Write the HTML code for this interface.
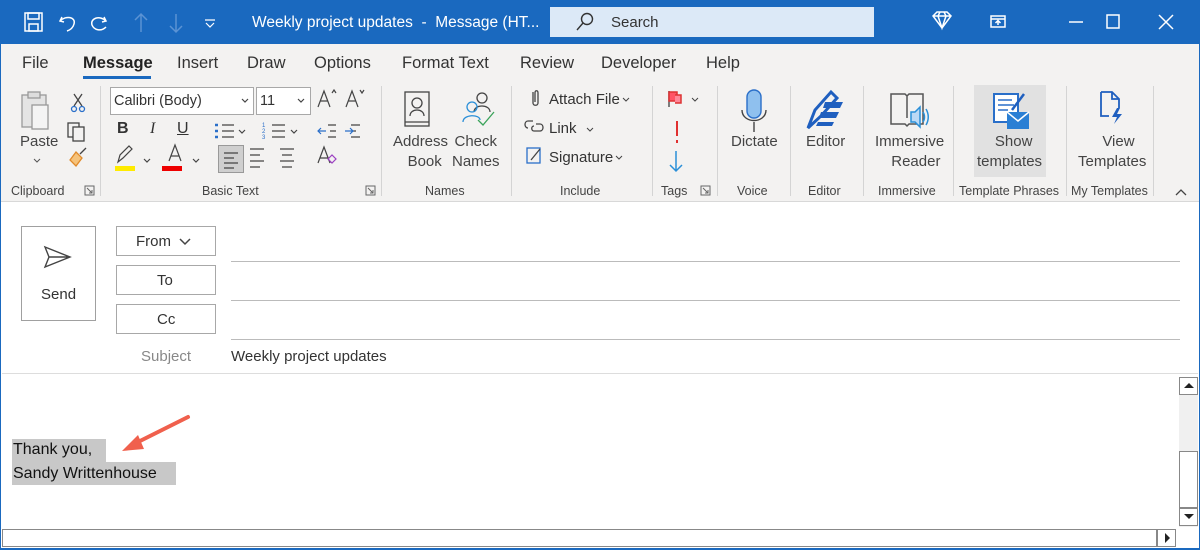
<!DOCTYPE html>
<html><head><meta charset="utf-8"><style>
*{margin:0;padding:0;box-sizing:border-box}
body{width:1200px;height:550px;position:relative;overflow:hidden;background:#fff;font-family:"Liberation Sans",sans-serif;color:#333}
.a{position:absolute;white-space:nowrap}
.tb{left:0;top:0;width:1200px;height:44px;background:#1a69bf}
.rb{left:0;top:44px;width:1200px;height:158px;background:#f3f2f1;border-bottom:1px solid #d8d8d8}
.tab{top:54px;font-size:16.5px;color:#333}
.gl{top:184px;font-size:12.5px;color:#444}
.sep{top:86px;width:1px;height:110px;background:#d4d4d4}
.big{font-size:15px;color:#444;text-align:center;line-height:20px}
.sm{font-size:15px;color:#333}
.box{border:1px solid #a8a8a8;background:#fff}
.ln{height:1px;background:#bbb}
</style></head><body>
<div class="a tb"></div>
<svg class="a" style="left:24px;top:12px" width="200" height="22" fill="none" stroke="#fff" stroke-width="1.5">
<rect x="1" y="1" width="17" height="18"/><rect x="4" y="1" width="11" height="6"/><rect x="5" y="12" width="9" height="7"/>
<path d="M38 5 L36 9 L40 10 M36 9 C42 3 52 5 50 12 C49 16 46 18 43 19"/>
<path d="M80 5 L82 9 L78 10 M82 9 C76 3 66 6 68 13 C70 18 77 20 82 15" />
<path d="M117 20 V2 M111 8 L117 2 L123 8 M152 2 V20 M146 14 L152 20 L158 14" stroke="#5b93d4"/>
<path d="M181 8 H191 M182 11 L186 15 L190 11" stroke-width="1.2"/>
</svg>
<div class="a" style="left:252px;top:14px;font-size:15.5px;color:#fff">Weekly project updates &nbsp;- &nbsp;Message (HT...</div>
<div class="a" style="left:550px;top:7px;width:324px;height:30px;background:#dce9f7"></div>
<svg class="a" style="left:575px;top:12px" width="20" height="20" fill="none" stroke="#333" stroke-width="1.4"><circle cx="12" cy="7" r="5.5"/><path d="M8 11 L2 18"/></svg>
<div class="a" style="left:611px;top:14px;font-size:15px;color:#333">Search</div>
<svg class="a" style="left:930px;top:10px" width="260" height="24" fill="none" stroke="#fff" stroke-width="1.5">
<path d="M3 6 L7 2 H17 L21 6 L12 18 Z M3 6 H21 M10 2 L8 6 L12 18 L16 6 L14 2"/>
<rect x="61" y="6" width="14" height="11"/><path d="M61 9 H75 M68 15 V11 M65.5 13 L68 10.5 L70.5 13"/>
<path d="M139 12 H153"/><rect x="177" y="5" width="12" height="13"/><path d="M229 5 L243 19 M243 5 L229 19"/>
</svg>
<div class="a rb"></div>
<div class="a tab" style="left:22px">File</div>
<div class="a tab" style="left:83px;color:#222;font-weight:bold">Message</div>
<div class="a" style="left:83px;top:76px;width:68px;height:3px;background:#1a69bf"></div>
<div class="a tab" style="left:177px">Insert</div>
<div class="a tab" style="left:247px">Draw</div>
<div class="a tab" style="left:314px">Options</div>
<div class="a tab" style="left:402px">Format Text</div>
<div class="a tab" style="left:520px">Review</div>
<div class="a tab" style="left:601px">Developer</div>
<div class="a tab" style="left:706px">Help</div>
<div class="a sep" style="left:100px"></div><div class="a sep" style="left:381px"></div><div class="a sep" style="left:511px"></div><div class="a sep" style="left:652px"></div><div class="a sep" style="left:717px"></div><div class="a sep" style="left:790px"></div><div class="a sep" style="left:863px"></div><div class="a sep" style="left:953px"></div><div class="a sep" style="left:1066px"></div><div class="a sep" style="left:1153px"></div>
<div class="a gl" style="left:11px">Clipboard</div><div class="a gl" style="left:202px">Basic Text</div><div class="a gl" style="left:425px">Names</div><div class="a gl" style="left:560px">Include</div><div class="a gl" style="left:661px">Tags</div><div class="a gl" style="left:737px">Voice</div><div class="a gl" style="left:808px">Editor</div><div class="a gl" style="left:878px">Immersive</div><div class="a gl" style="left:959px">Template Phrases</div><div class="a gl" style="left:1071px">My Templates</div>
<svg class="a" style="left:84px;top:185px" width="300" height="12" fill="none" stroke="#666"><rect x="1" y="1" width="9" height="9"/><path d="M3 3 L8 8 M8 5 V8 H5"/><rect x="282" y="1" width="9" height="9"/><path d="M284 3 L289 8 M289 5 V8 H286"/></svg>
<svg class="a" style="left:700px;top:185px" width="12" height="12" fill="none" stroke="#666"><rect x="1" y="1" width="9" height="9"/><path d="M3 3 L8 8 M8 5 V8 H5"/></svg>
<svg class="a" style="left:1174px;top:187px" width="14" height="10" fill="none" stroke="#444" stroke-width="1.3"><path d="M2 8 L7 3 L12 8"/></svg>
<!-- clipboard -->
<svg class="a" style="left:18px;top:90px" width="80" height="80" fill="none" stroke="#999" stroke-width="1.3">
<rect x="4" y="5" width="24" height="32" fill="#e4e4e4"/><rect x="14" y="15" width="16" height="24" fill="#f4f4f4"/><rect x="10" y="2" width="12" height="6" fill="#ddd"/>
<path d="M56 4 L64 16 M64 4 L56 16" stroke="#444"/><circle cx="56" cy="19" r="2.5" stroke="#2a6fc9"/><circle cx="64" cy="19" r="2.5" stroke="#2a6fc9"/>
<rect x="50" y="33" width="11" height="14" stroke="#444"/><rect x="55" y="37" width="11" height="14" stroke="#444" fill="#f3f2f1"/>
<path d="M52 70 L58 62 L64 68 L58 76 Z" stroke="#e08a2a" fill="#f5c27a"/><path d="M62 64 L68 58" stroke="#444"/>
</svg>
<div class="a big" style="left:20px;top:132px">Paste</div>
<svg class="a" style="left:32px;top:157px" width="10" height="8" fill="none" stroke="#555"><path d="M2 2 L5 5 L8 2"/></svg>
<!-- basic text -->
<div class="a box" style="left:110px;top:87px;width:144px;height:28px"></div>
<div class="a" style="left:114px;top:93px;font-size:14.5px">Calibri (Body)</div>
<div class="a box" style="left:256px;top:87px;width:55px;height:28px"></div>
<div class="a" style="left:260px;top:93px;font-size:14.5px">11</div>
<div class="a" style="left:218px;top:145px;width:26px;height:28px;background:#cfcfcf;border:1px solid #999"></div>
<svg class="a" style="left:110px;top:87px" width="270" height="100" fill="none" stroke="#444" stroke-width="1.2">
<path d="M132 12 L135 15 L138 12 M188 12 L191 15 L194 12"/>
<path d="M208 20 L214 4 L220 20 M210 14 H218 M222 6 L224 3 L226 6" />
<path d="M236 20 L242 4 L248 20 M238 14 H246 M250 3 L252 6 L254 3"/>
<path d="M112 38 H124 M112 44 H124 M112 50 H124"/><path d="M105 38 H108 M105 44 H108 M105 50 H108" stroke="#2a6fc9" stroke-width="2.5"/>
<path d="M129 43 L132 46 L135 43 M181 43 L184 46 L187 43 M34 72 L37 75 L40 72 M83 72 L86 75 L89 72"/>
<path d="M162 38 H175 M162 44 H175 M162 50 H175"/>
<text x="152" y="40" font-size="6" fill="#2a6fc9" stroke="none">1</text><text x="152" y="46" font-size="6" fill="#2a6fc9" stroke="none">2</text><text x="152" y="52" font-size="6" fill="#2a6fc9" stroke="none">3</text>
<path d="M218 38 H226 M220 44 H226 M218 50 H226 M241 38 H250 M241 44 H246 M241 50 H250"/>
<path d="M208 44 H216 M211 41 L208 44 L211 47 M235 44 H243 M240 41 L243 44 L240 47" stroke="#2a6fc9"/>
<path d="M8 75 L10 68 L19 59 L22 62 L13 71 Z"/>
<path d="M59 74 L65 58 L71 74 M61 69 H69"/>
<path d="M140 62 H154 M140 68 H150 M140 74 H154 M140 80 H150 M170 62 H184 M172 68 H182 M170 74 H184 M172 80 H182"/>
<path d="M208 76 L214 60 L220 76 M210 71 H218"/><path d="M218 72 L222 68 L226 72 L222 76 Z" stroke="#9b3fc2"/>
</svg>
<div class="a" style="left:117px;top:120px;font-size:16px;font-weight:bold">B</div>
<div class="a" style="left:150px;top:120px;font-size:16px;font-style:italic;font-family:'Liberation Serif',serif">I</div>
<div class="a" style="left:177px;top:120px;font-size:16px;text-decoration:underline">U</div>
<div class="a" style="left:115px;top:166px;width:20px;height:5px;background:#ffeb00"></div>
<div class="a" style="left:162px;top:166px;width:20px;height:5px;background:#e00"></div>
<svg class="a" style="left:218px;top:145px" width="30" height="30" fill="none" stroke="#444" stroke-width="1.2"><path d="M6 8 H20 M6 13 H16 M6 18 H20 M6 23 H16"/></svg>
<!-- names -->
<svg class="a" style="left:400px;top:90px" width="100" height="45" fill="none" stroke="#444" stroke-width="1.3">
<rect x="5" y="2" width="24" height="34"/><path d="M5 32 H29"/><circle cx="17" cy="13" r="5"/><path d="M10 26 C10 18 24 18 24 26"/>
<circle cx="82" cy="8" r="5"/><path d="M74 22 C74 14 90 14 90 22"/>
<circle cx="72" cy="17" r="5" stroke="#2a8fd8"/><path d="M63 32 C63 24 80 24 80 30" stroke="#2a8fd8"/><path d="M78 30 L83 35 L94 22" stroke="#3aa35a"/>
</svg>
<div class="a big" style="left:393px;top:132px">Address<br>&nbsp;&nbsp;Book</div>
<div class="a big" style="left:452px;top:132px">Check<br>Names</div>
<!-- include -->
<svg class="a" style="left:524px;top:88px" width="30" height="80" fill="none" stroke="#444" stroke-width="1.3">
<path d="M9 4 V15 C9 18 14 18 14 15 V5 C14 2 11 2 11 5 V14"/>
<path d="M4 40 C0 40 0 33 4 33 H9 M12 36 H16 C20 36 20 43 16 43 H10 C7 43 7 38 10 38"/>
<rect x="3" y="60" width="13" height="15" stroke="#2a6fc9"/><path d="M7 72 L16 61" stroke="#444"/>
</svg>
<div class="a sm" style="left:549px;top:91px">Attach File</div>
<div class="a sm" style="left:549px;top:120px">Link</div>
<div class="a sm" style="left:549px;top:149px">Signature</div>
<svg class="a" style="left:580px;top:95px" width="50" height="70" fill="none" stroke="#444"><path d="M43 3 L46 6 L49 3 M7 33 L10 36 L13 33 M36 61 L39 64 L42 61"/></svg>
<!-- tags -->
<svg class="a" style="left:664px;top:89px" width="40" height="85" fill="none" stroke-width="1.5">
<path d="M5 2 V18" stroke="#555"/><path d="M5 3 H13 V12 H5 Z" fill="#f56" stroke="#d33"/><path d="M11 6 H17 V14 H11" fill="#f89" stroke="#d33"/>
<path d="M28 9 L31 12 L34 9" stroke="#444" stroke-width="1"/>
<path d="M13 32 V47 M13 51 V54" stroke="#e03030" stroke-width="2"/>
<path d="M12 62 V82 M6 76 L12 82 L18 76" stroke="#2a8fd8"/>
</svg>
<svg class="a" style="left:737px;top:88px" width="36" height="48" fill="none" stroke="#444" stroke-width="1.4"><rect x="10" y="2" width="14" height="28" rx="7" fill="#8fc0ee" stroke="#2a6fc9"/><path d="M5 22 C5 36 29 36 29 22 M17 34 V44"/></svg>
<div class="a big" style="left:731px;top:132px">Dictate</div>
<svg class="a" style="left:805px;top:88px" width="42" height="44"><path d="M3 40 L10 22 L26 4 L32 10 L16 28 Z" fill="none" stroke="#1f5fbf" stroke-width="3"/><path d="M20 14 H38 L35 20 H18 Z M16 24 H34 L31 30 H14 Z M13 34 H29 L27 38 H11Z" fill="#1f5fbf"/></svg>
<div class="a big" style="left:806px;top:132px">Editor</div>
<svg class="a" style="left:887px;top:90px" width="46" height="44" fill="none" stroke="#555" stroke-width="1.5"><path d="M4 4 H18 L20 6 L22 4 H36 V34 H22 L20 36 L18 34 H4 Z M20 6 V28"/><path d="M24 22 H28 L33 17 V37 L28 32 H24 Z" fill="#bcd9f5" stroke="#2a8fd8"/><path d="M36 22 C38 25 38 29 36 32 M39 19 C42 24 42 30 39 35" stroke="#2a8fd8"/></svg>
<div class="a big" style="left:875px;top:132px">Immersive<br>&nbsp;&nbsp;&nbsp;Reader</div>
<div class="a" style="left:974px;top:85px;width:72px;height:92px;background:#e1e1e1"></div>
<svg class="a" style="left:990px;top:90px" width="42" height="42"><rect x="4" y="4" width="24" height="28" fill="#fff" stroke="#2a6fc9" stroke-width="2"/><path d="M8 10 H22 M8 15 H24 M8 20 H18" stroke="#2a6fc9" stroke-width="1.5"/><path d="M22 20 L34 4" stroke="#1f5fbf" stroke-width="2.5"/><rect x="17" y="22" width="22" height="17" fill="#2a7fd4"/><path d="M17 22 L28 31 L39 22" stroke="#fff" stroke-width="1.5" fill="none"/></svg>
<div class="a big" style="left:977px;top:132px">&nbsp;&nbsp;Show<br>templates</div>
<svg class="a" style="left:1097px;top:90px" width="32" height="36" fill="none" stroke="#1f5fbf" stroke-width="1.8"><path d="M4 2 H15 L22 9 V18 M4 2 V26 H12 M15 2 V9 H22"/><path d="M20 18 L15 27 H20 L17 34 L25 24 H20 L23 18 Z" fill="#1f5fbf" stroke="none"/></svg>
<div class="a big" style="left:1078px;top:132px">&nbsp;&nbsp;&nbsp;View<br>Templates</div>
<!-- compose -->
<div class="a" style="left:0;top:44px;width:1px;height:506px;background:#1a69bf"></div>
<div class="a" style="left:1199px;top:44px;width:1px;height:506px;background:#1a69bf"></div>
<div class="a" style="left:0;top:548px;width:1200px;height:2px;background:#1a69bf"></div>
<div class="a" style="left:21px;top:226px;width:75px;height:95px;border:1px solid #a0a0a0"></div>
<svg class="a" style="left:43px;top:245px" width="30" height="26" fill="none" stroke="#444" stroke-width="1.4"><path d="M2 2 L27 12 L2 22 L6 12 Z M6 12 H27"/></svg>
<div class="a" style="left:41px;top:286px;font-size:15px">Send</div>
<div class="a box" style="left:116px;top:226px;width:100px;height:30px"></div>
<div class="a" style="left:136px;top:233px;font-size:15px">From</div>
<svg class="a" style="left:178px;top:237px" width="14" height="10" fill="none" stroke="#444" stroke-width="1.5"><path d="M2 2 L7 7 L12 2"/></svg>
<div class="a box" style="left:116px;top:265px;width:100px;height:30px"></div>
<div class="a" style="left:157px;top:272px;font-size:15px">To</div>
<div class="a box" style="left:116px;top:304px;width:100px;height:30px"></div>
<div class="a" style="left:157px;top:311px;font-size:15px">Cc</div>
<div class="a ln" style="left:231px;top:261px;width:949px"></div>
<div class="a ln" style="left:231px;top:300px;width:949px"></div>
<div class="a ln" style="left:231px;top:339px;width:949px"></div>
<div class="a" style="left:141px;top:348px;font-size:15px;color:#888">Subject</div>
<div class="a" style="left:231px;top:348px;font-size:15px">Weekly project updates</div>
<div class="a" style="left:2px;top:373px;width:1196px;height:1px;background:#ddd"></div>
<div class="a" style="left:12px;top:439px;width:94px;height:23px;background:#c8c8c8"></div>
<div class="a" style="left:12px;top:462px;width:164px;height:23px;background:#c8c8c8"></div>
<div class="a" style="left:13px;top:441px;font-size:16px;color:#111">Thank you,</div>
<div class="a" style="left:13px;top:465px;font-size:16px;color:#111">Sandy Writtenhouse</div>
<svg class="a" style="left:118px;top:412px" width="75" height="45"><path d="M70 5 L14 33" stroke="#f0604d" stroke-width="4" stroke-linecap="round"/><path d="M4 39 L20 23 L26 37 Z" fill="#f0604d"/></svg>
<div class="a" style="left:1179px;top:377px;width:19px;height:150px;background:#f0f0f0"></div>
<div class="a" style="left:1179px;top:377px;width:19px;height:18px;background:#fff;border:1px solid #888"></div>
<svg class="a" style="left:1184px;top:383px" width="10" height="6"><path d="M0 5 L5 0 L10 5Z" fill="#222"/></svg>
<div class="a" style="left:1179px;top:451px;width:19px;height:57px;background:#fff;border:1px solid #888"></div>
<div class="a" style="left:1179px;top:508px;width:19px;height:18px;background:#fff;border:1px solid #888"></div>
<svg class="a" style="left:1184px;top:514px" width="10" height="6"><path d="M0 0 L5 5 L10 0Z" fill="#222"/></svg>
<div class="a" style="left:2px;top:529px;width:1155px;height:18px;background:#fff;border:1px solid #888"></div>
<div class="a" style="left:1157px;top:529px;width:19px;height:18px;background:#fff;border:1px solid #888"></div>
<svg class="a" style="left:1165px;top:533px" width="6" height="10"><path d="M0 0 L5 5 L0 10Z" fill="#222"/></svg>
</body></html>
